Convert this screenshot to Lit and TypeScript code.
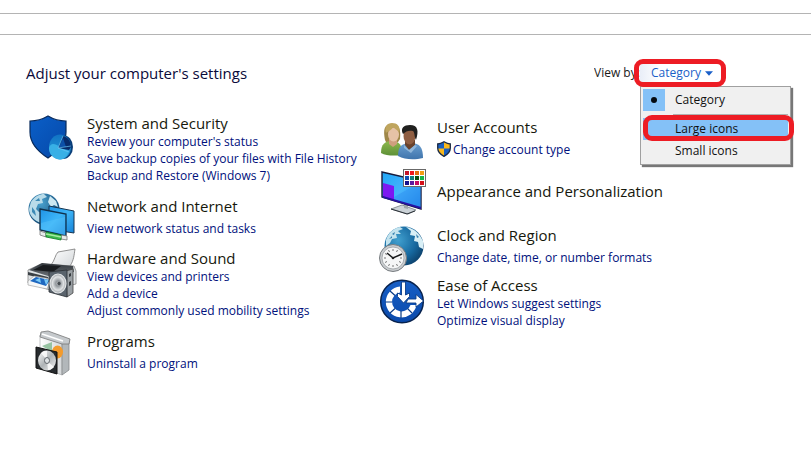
import { LitElement, html, css, svg, nothing } from "lit";
import { customElement, property, state } from "lit/decorators.js";
import { classMap } from "lit/directives/class-map.js";

const icons: Record<string, unknown> = {
  security: svg`
    <defs>
      <linearGradient id="sh" x1="0" y1="0" x2="1" y2="1"><stop offset="0" stop-color="#0a5fc8"/><stop offset="1" stop-color="#0648a8"/></linearGradient>
      <linearGradient id="pie" x1="0" y1="0" x2="0" y2="1"><stop offset="0" stop-color="#1173c4"/><stop offset="1" stop-color="#27a0dc"/></linearGradient>
    </defs>
    <path d="M2 8C10 8 15 6 20 3C25 6 30 8 38 8V19C38 30 30 38 20 45C9 38 2 30 2 19Z" fill="url(#sh)" stroke="#082a5c" stroke-width="1.2"/>
    <ellipse cx="35" cy="34" rx="10" ry="12" fill="#0a3e78"/>
    <ellipse cx="32" cy="34" rx="11" ry="12.500" fill="url(#pie)"/>
    <path d="M32 34L41 38C39 44 36 46 32 46.500C25 46 21 41 21 35C23 29 27 31 32 34Z" fill="#38b0e6"/>
    <path d="M30 35L35 23C40 24 43 29 43 34L41 37Z" fill="#072b6b"/>
    <path d="M31 34L35 25L38 34Z" fill="#0c50a8"/>
    <path d="M30 35L35 23M30 35L43 33M30 35L41 39" stroke="#6cc6f4" stroke-width=".7" fill="none"/>`,
  network: svg`
    <defs>
      <radialGradient id="gl" cx=".4" cy=".3" r=".8"><stop offset="0" stop-color="#4aa3d0"/><stop offset="1" stop-color="#0d3f6b"/></radialGradient>
      <linearGradient id="scr" x1="0" y1="0" x2="1" y2="1"><stop offset="0" stop-color="#1f93e6"/><stop offset=".5" stop-color="#3db5f7"/><stop offset="1" stop-color="#1681d6"/></linearGradient>
    </defs>
    <circle cx="16" cy="17" r="15.500" fill="url(#gl)"/>
    <path d="M3 10C7 4 12 2 16 2L19 5L14 7L15 11L10 12L8 17L11 20L15 21L17 26L13 31C6 29 1 23 1 17Z" fill="#b8dbe9"/>
    <path d="M22 4L28 9L30 15L26 13L23 15L20 10Z" fill="#cce8f2"/>
    <path d="M7 9L11 6L12 9ZM4 15L7 19L8 24L4 20Z" fill="#3c8ab5"/>
    <path d="M21 14L46 19V41L21 37Z" fill="url(#scr)" stroke="#173550"/>
    <path d="M12 17L38 22V44L12 38Z" fill="url(#scr)" stroke="#10304b" stroke-width="1.300"/>
    <path d="M13 31L37 25V43L13 37Z" fill="#59c3fa" opacity=".45"/>
    <path d="M12 39L18 41V45L12 43ZM33 43L39 44V48L33 47Z" fill="#e7ebeb" stroke="#777" stroke-width=".8"/>
    <path d="M18 40L33 43V48L18 45Z" fill="#3dbb4c" stroke="#0a7a24" stroke-width=".8"/>
    <path d="M18 42L33 45" stroke="#a5eaa2" stroke-width="1.500"/>`,
  hardware: svg`
    <defs>
      <linearGradient id="paper" x1="0" y1="0" x2="1" y2="1"><stop offset="0" stop-color="#fff"/><stop offset="1" stop-color="#cfd3d6"/></linearGradient>
      <linearGradient id="prn" x1="0" y1="0" x2="0" y2="1"><stop offset="0" stop-color="#33383d"/><stop offset="1" stop-color="#666c72"/></linearGradient>
      <radialGradient id="cone"><stop offset="0" stop-color="#f4f4f4"/><stop offset=".25" stop-color="#8d9398"/><stop offset=".7" stop-color="#dfe2e4"/><stop offset="1" stop-color="#9ba0a4"/></radialGradient>
    </defs>
    <path d="M23 17C27 12 27 7 30 4L47 1C46 7 46 12 42 18L41 23Z" fill="url(#paper)" stroke="#777" stroke-width=".8"/>
    <path d="M0 22L13 16L46 18L48 23V36L22 42L0 35Z" fill="#dfe3e5" stroke="#888" stroke-width=".8"/>
    <path d="M1 22L14 15L45 18L46 24L20 28Z" fill="url(#prn)"/>
    <path d="M5 22L15 17L33 18L25 24Z" fill="#191c1f"/>
    <path d="M0 24L20 29V32L0 27Z" fill="#3a4045"/>
    <path d="M0 33L6 28L23 31L19 41L0 37Z" fill="#f6f8f9" stroke="#999" stroke-width=".6"/>
    <path d="M2 33L8 29L22 32L18 38Z" fill="#1e68c0"/>
    <path d="M7 32L12 30L13 35ZM16 31L21 32L18 37Z" fill="#79c8f5"/>
    <path d="M38 23L45 21V45L39 49Z" fill="#9aa0a4" stroke="#444" stroke-width=".8"/>
    <path d="M41 26L43 25V28L41 29ZM41 34L43 33V37L41 38Z" fill="#353a3e"/>
    <path d="M21 24L39 22V49L21 44Z" fill="#59636c" stroke="#2a2f33" stroke-width=".8"/>
    <ellipse cx="30" cy="35.500" rx="8" ry="9.500" fill="url(#cone)" stroke="#e2e5e7" stroke-width="1.200"/>
    <circle cx="31" cy="35.500" r="1.700" fill="#484e53"/>`,
  programs: svg`
    <defs>
      <linearGradient id="box" x1="0" y1="0" x2="1" y2="0"><stop offset="0" stop-color="#fff"/><stop offset="1" stop-color="#d5d8da"/></linearGradient>
      <linearGradient id="cd" x1="0" y1="0" x2="1" y2="1"><stop offset="0" stop-color="#fff"/><stop offset=".5" stop-color="#aeb3b6"/><stop offset="1" stop-color="#f4f4f4"/></linearGradient>
    </defs>
    <path d="M12 8L34 14V48L12 40Z" fill="url(#box)" stroke="#b6b9bb" stroke-width=".8"/>
    <path d="M34 15L41 12V43L34 48Z" fill="#b2b7ba" stroke="#85898c" stroke-width=".8"/>
    <path d="M13 5L20 4L42 12L41 17L34 17L12 10Z" fill="#c5c9cc" stroke="#777" stroke-width=".8"/>
    <path d="M14 7L35 14" stroke="#fff" stroke-width="1.500"/>
    <path d="M14 19L24 15V25Z" fill="#97c3a2"/>
    <ellipse cx="29.500" cy="25" rx="5.500" ry="6.500" fill="#f49b2c"/>
    <path d="M8 20L29 25V47L8 41Z" fill="#272b2e" stroke="#111"/>
    <ellipse cx="19" cy="33.500" rx="9" ry="10" fill="url(#cd)"/>
    <path d="M19 33L13 26C16 23 18 24 19 24ZM19 34L26 40C23 43 21 43 20 43Z" fill="#fff" opacity=".8"/>
    <ellipse cx="19" cy="33.500" rx="2.500" ry="3" fill="#dfe3e6" stroke="#60666b"/>`,
  users: svg`
    <defs>
      <linearGradient id="grn" x1="0" y1="0" x2="0" y2="1"><stop offset="0" stop-color="#8eb84c"/><stop offset="1" stop-color="#5d9038"/></linearGradient>
      <linearGradient id="blu" x1="0" y1="0" x2="0" y2="1"><stop offset="0" stop-color="#6b9fd0"/><stop offset="1" stop-color="#3f74ac"/></linearGradient>
    </defs>
    <path d="M7 27C5 17 6 11 14 11C21 11 23 16 22 26L20 29H8Z" fill="#9f8748"/>
    <path d="M3 40C3 31 7 28 14 28C20 28 23 31 24 37V42C17 43 8 43 3 40Z" fill="url(#grn)"/>
    <path d="M11 26H19V31L15 34L11 31Z" fill="#cf9f7e"/>
    <ellipse cx="15.500" cy="21.500" rx="5.500" ry="7" fill="#e6c2a6"/>
    <path d="M8 20C10 18 14 17 15 14C18 17 20 17 21 20C23 13 19 10 14 10C9 10 6 14 8 20Z" fill="#bfa55e"/>
    <path d="M20 43C20 33 24 30 33 30C42 30 45 35 45 45C37 47 27 47 20 43Z" fill="url(#blu)"/>
    <path d="M27 27H37V32L31 37L27 32Z" fill="#6a432c"/>
    <ellipse cx="31.500" cy="23" rx="6" ry="8.500" fill="#8f5e42"/>
    <path d="M25 21C22 15 26 12 32 12C40 12 41 18 38 27C36 23 37 20 35 18C31 17 28 18 25 21Z" fill="#20201f"/>
    <path d="M26 32L31 37L37 32L39 33L33 40L26 35Z" fill="#8fb6da"/>`,
  appearance: svg`
    <defs><linearGradient id="mon" x1="0" y1="0" x2="1" y2="1"><stop offset="0" stop-color="#20a6f8"/><stop offset=".5" stop-color="#45b3fb"/><stop offset="1" stop-color="#167be2"/></linearGradient></defs>
    <path d="M13 42L24 38L38 43L30 47Z" fill="#cbd2d7" stroke="#747c83" stroke-width=".8"/>
    <path d="M13 42L29 47L37 44" fill="none" stroke="#2a3036"/>
    <path d="M26 35L30 36V42L26 41Z" fill="#9ea6ac"/>
    <path d="M4 5L43 14V42L4 30Z" fill="url(#mon)" stroke="#171b3c" stroke-width="1.400"/>
    <path d="M5 16L16 19V33L5 30Z" fill="#7d18f1"/>
    <path d="M16 30L43 15V40L16 33Z" fill="#2f91f2" opacity=".5"/>
    <path d="M5 29L43 40V42L5 31Z" fill="#2611a3"/>
    <rect x="25.500" y="2.500" width="22" height="17" fill="#fff" stroke="#686868"/>
    <g><rect x="27" y="4" width="4" height="4" fill="#c51327"/><rect x="32" y="4" width="4" height="4" fill="#ee171d"/><rect x="37" y="4" width="4" height="4" fill="#e36c0d"/><rect x="42" y="4" width="4" height="4" fill="#f29b12"/>
    <rect x="27" y="9" width="4" height="4" fill="#124eb0"/><rect x="32" y="9" width="4" height="4" fill="#11807b"/><rect x="37" y="9" width="4" height="4" fill="#0a5010"/><rect x="42" y="9" width="4" height="4" fill="#16b548"/>
    <rect x="27" y="14" width="4" height="4" fill="#16108a"/><rect x="32" y="14" width="4" height="4" fill="#5e1ba0"/><rect x="37" y="14" width="4" height="4" fill="#c40c62"/><rect x="42" y="14" width="4" height="4" fill="#d41018"/></g>`,
  clock: svg`
    <defs><radialGradient id="gl2" cx=".35" cy=".35" r=".75"><stop offset="0" stop-color="#41a0cf"/><stop offset=".6" stop-color="#1769a0"/><stop offset="1" stop-color="#0b3d66"/></radialGradient></defs>
    <circle cx="26" cy="25" r="19.500" fill="url(#gl2)"/>
    <path d="M8 19C10 12 16 7 22 6L25 8L20 10L23 13L18 13L19 17L14 18L12 22L8 25Z" fill="#c3e3ee"/>
    <path d="M28 6C36 7 42 13 45 20V28L41 26L40 21L36 20L37 15L32 14L33 10Z" fill="#d8eff6"/>
    <path d="M14 13L17 11L16 14ZM38 13L41 16L39 17ZM11 18L14 15L14 17Z" fill="#357fae"/>
    <circle cx="15" cy="37" r="13.500" fill="#c9cccf" stroke="#777c80"/>
    <circle cx="15" cy="37" r="11" fill="#f5f6f7" stroke="#999ea2" stroke-width=".8"/>
    <path d="M15 28V30M15 44V46M6 37H8M22 37H24M10.500 29L11.500 31M19.500 29L18.500 31M7 32.500L9 33.500M23 41.500L21 40.500M7 41.500L9 40.500M10.500 45L11.500 43M19.500 45L18.500 43" stroke="#777"/>
    <path d="M9 32L15 37L24 33" fill="none" stroke="#17191b" stroke-width="1.500"/>
    <circle cx="15" cy="37" r="1.300" fill="#222"/>`,
  access: svg`
    <defs><linearGradient id="ac" x1="0" y1="0" x2="0" y2="1"><stop offset="0" stop-color="#175fc6"/><stop offset="1" stop-color="#0a49ab"/></linearGradient></defs>
    <circle cx="24" cy="26.500" r="21.300" fill="url(#ac)" stroke="#08224d" stroke-width="1.500"/>
    <path d="M22 11.500A15.500 15.500 0 1 0 38.500 30H32.500A9.500 9.500 0 1 1 22 17.500Z" fill="#fff"/>
    <path d="M7 27H14M23 36V43M12 16L17 20.500M12 38L17 33.500M34 38L29.500 33.500" stroke="#0b3c86" stroke-width="1.200"/>
    <path d="M23.500 7H27.500V20L31.500 18V21.500L25.500 28L19.500 21.500V18L23.500 20Z" fill="#fff" stroke="#0b3c86" stroke-width=".9"/>
    <path d="M30 24H38V19.500L45.500 26L38 32V28H28Z" fill="#fff" stroke="#0b3c86" stroke-width=".9"/>`,
};

interface Category {
  icon: string;
  title: string;
  links: string[];
  elevated?: boolean;
}

const LEFT: Category[] = [
  { icon: "security", title: "System and Security", links: ["Review your computer's status", "Save backup copies of your files with File History", "Backup and Restore (Windows 7)"] },
  { icon: "network", title: "Network and Internet", links: ["View network status and tasks"] },
  { icon: "hardware", title: "Hardware and Sound", links: ["View devices and printers", "Add a device", "Adjust commonly used mobility settings"] },
  { icon: "programs", title: "Programs", links: ["Uninstall a program"] },
];

const RIGHT: Category[] = [
  { icon: "users", title: "User Accounts", links: ["Change account type"], elevated: true },
  { icon: "appearance", title: "Appearance and Personalization", links: [] },
  { icon: "clock", title: "Clock and Region", links: ["Change date, time, or number formats"] },
  { icon: "access", title: "Ease of Access", links: ["Let Windows suggest settings", "Optimize visual display"] },
];

@customElement("category-item")
export class CategoryItem extends LitElement {
  @property({ attribute: false }) item!: Category;

  static styles = css`
    :host { display: block; }
    .item { display: flex; gap: 11px; align-items: center; }
    .item.multi { align-items: flex-start; }
    .icon { flex: none; width: 48px; height: 48px; overflow: visible; }
    .title { margin: 0; font-size: 15px; font-weight: 400; line-height: 20px; white-space: nowrap; }
    .title a { color: #16180c; }
    .links { margin: 4px 0 0; padding: 0; list-style: none; }
    .multi .links { margin-top: 0; }
    .links li { display: flex; align-items: center; gap: 2px; font-size: 12px; line-height: 17px; white-space: nowrap; }
    .links a { color: #00107c; }
    a { text-decoration: none; }
    a:hover { text-decoration: underline; }
    .uac { width: 14px; height: 16px; }
  `;

  render() {
    const { icon, title, links, elevated } = this.item;
    return html`
      <section class=${classMap({ item: true, multi: links.length > 1 })}>
        <svg class="icon" viewBox="0 0 48 48" aria-hidden="true">${icons[icon]}</svg>
        <div>
          <h2 class="title"><a href="#">${title}</a></h2>
          ${links.length
            ? html`<ul class="links">
                ${links.map((l) => html`<li>${elevated ? this.shield() : nothing}<a href="#">${l}</a></li>`)}
              </ul>`
            : nothing}
        </div>
      </section>`;
  }

  private shield() {
    return html`<svg class="uac" viewBox="0 0 14 16" aria-hidden="true">
      <path d="M.7 3C3 3 5 2 7 .8C9 2 11 3 13.300 3V7C13.300 11 10.500 13.500 7 15.300C3.500 13.500 .7 11 .7 7Z" fill="#1a5fc0"/>
      <path d="M7 .8C9 2 11 3 13.300 3V7.500H7ZM7 7.500V15.300C3.500 13.500 1 11 .7 7.500Z" fill="#f9b81c"/>
      <path d="M.7 3C3 3 5 2 7 .8C9 2 11 3 13.300 3V7C13.300 11 10.500 13.500 7 15.300C3.500 13.500 .7 11 .7 7Z" fill="none" stroke="#1c2b44" stroke-width="1.300"/>
    </svg>`;
  }
}

@customElement("view-picker")
export class ViewPicker extends LitElement {
  @state() private open = true;

  static styles = css`
    :host { display: flex; font-size: 12px; line-height: 20px; }
    button { font: inherit; border: 0; margin: 0; padding: 0; cursor: pointer; text-align: left; }
    .label { width: 46px; overflow: hidden; white-space: nowrap; color: #1a1a1a; }
    .anchor { position: relative; width: 151px; }
    .trigger { display: flex; align-items: center; gap: 4px; width: 82px; height: 20px; padding: 0 11px; background: linear-gradient(90deg, #e9eef8, #ffffff 20px); color: #1a5fc8; }
    .arrow { flex: none; width: 8px; height: 5px; }
    .ring { position: absolute; box-sizing: border-box; border: 5px solid #ed1c24; border-radius: 9px; pointer-events: none; }
    .ring.current { left: -6px; right: 65px; top: -4px; height: 28px; }
    .ring.choice { left: 2px; right: -4px; top: 28px; height: 26px; }
    .menu { position: absolute; top: 23px; left: 0; right: 0; box-sizing: border-box; border: 1px solid #a0a0a0; background: #f0f0f0; padding: 2px; box-shadow: 2px 2px 1px #777; }
    .option { display: flex; align-items: center; gap: 10px; width: 100%; height: 22px; background: none; color: #111; white-space: nowrap; }
    .option.hot { background: #84c1f7; }
    .mark { display: grid; place-items: center; flex: none; width: 22px; height: 22px; }
    .mark.on { background: #84c1f7; }
    .mark.on::before { content: ""; width: 6px; height: 6px; border-radius: 50%; background: #050a10; }
    .rule { margin: 3px 0 3px 30px; border: 0; border-top: 1px solid #b0b0b0; }
  `;

  render() {
    return html`
      <span class="label" id="view-label">View by:</span>
      <div class="anchor">
        <button class="trigger" aria-haspopup="menu" aria-expanded=${this.open} aria-describedby="view-label" @click=${() => (this.open = !this.open)}>
          Category
          <svg class="arrow" viewBox="0 0 9 5" aria-hidden="true"><path d="M0 0H9L4.500 5Z" fill="#1a5fc8"/></svg>
        </button>
        ${this.open
          ? html`<div class="menu" role="menu">
              <button class="option" role="menuitemradio" aria-checked="true"><span class="mark on"></span>Category</button>
              <hr class="rule" />
              <button class="option hot" role="menuitemradio" aria-checked="false"><span class="mark"></span>Large icons</button>
              <button class="option" role="menuitemradio" aria-checked="false"><span class="mark"></span>Small icons</button>
              <span class="ring choice"></span>
            </div>`
          : nothing}
        <span class="ring current"></span>
      </div>`;
  }
}

@customElement("app-root")
export class AppRoot extends LitElement {
  static styles = css`
    :host { display: flow-root; min-height: 100vh; background: #fff; font-family: "Open Sans", "Noto Sans", sans-serif; }
    .band { margin-top: 13px; height: 20px; border: solid #b4b4b4; border-width: 1px 0; }
    .head { display: flex; justify-content: space-between; align-items: flex-start; padding: 28px 20px 0 26px; }
    .heading { margin: 0; font-size: 15px; font-weight: 400; line-height: 20px; color: #0a0a3a; white-space: nowrap; }
    .columns { display: grid; grid-template-columns: 350fr 413fr; padding: 30px 20px 20px 28px; }
    .column { display: flex; flex-direction: column; gap: 8px; }
    .column.tight { gap: 6px; }
  `;

  render() {
    return html`
      <div class="band"></div>
      <header class="head">
        <h1 class="heading">Adjust your computer's settings</h1>
        <view-picker></view-picker>
      </header>
      <main class="columns">
        <div class="column">${LEFT.map((c) => html`<category-item .item=${c}></category-item>`)}</div>
        <div class="column tight">${RIGHT.map((c) => html`<category-item .item=${c}></category-item>`)}</div>
      </main>`;
  }
}
